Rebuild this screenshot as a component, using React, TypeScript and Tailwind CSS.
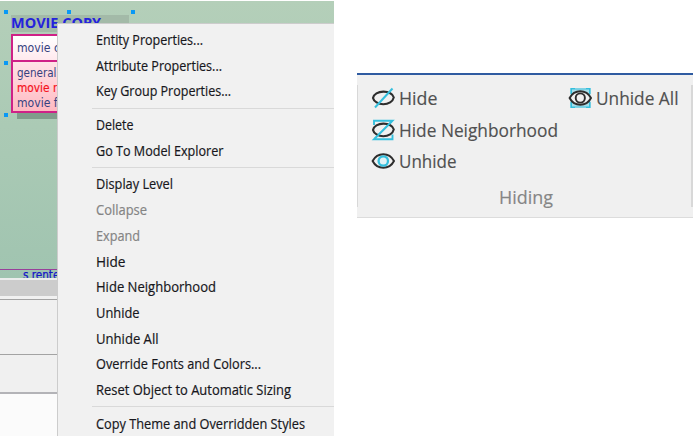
import { useLayoutEffect, useRef } from "react";

// Single-line label squeezed horizontally so that it spans `width` pixels.
function Label({ text, width, className = "" }: { text: string; width: number; className?: string }) {
  const ref = useRef<HTMLSpanElement>(null);
  useLayoutEffect(() => {
    const el = ref.current;
    if (el) el.style.transform = `scaleX(${width / el.getBoundingClientRect().width})`;
    return () => {
      if (el) el.style.transform = "";
    };
  }, [text, width]);
  return (
    <span className={`block shrink-0 ${className}`} style={{ width }}>
      <span ref={ref} className="inline-block origin-left whitespace-nowrap">
        {text}
      </span>
    </span>
  );
}

type Item = { text: string; width: number; disabled?: boolean };

const groups: Item[][] = [
  [
    { text: "Entity Properties...", width: 107 },
    { text: "Attribute Properties...", width: 126 },
    { text: "Key Group Properties...", width: 135 },
  ],
  [
    { text: "Delete", width: 37.5 },
    { text: "Go To Model Explorer", width: 127.5 },
  ],
  [
    { text: "Display Level", width: 77 },
    { text: "Collapse", width: 51, disabled: true },
    { text: "Expand", width: 44, disabled: true },
    { text: "Hide", width: 29.5 },
    { text: "Hide Neighborhood", width: 120 },
    { text: "Unhide", width: 43.5 },
    { text: "Unhide All", width: 62.5 },
    { text: "Override Fonts and Colors...", width: 165 },
    { text: "Reset Object to Automatic Sizing", width: 195 },
  ],
  [{ text: "Copy Theme and Overridden Styles", width: 209 }],
];

function ContextMenu() {
  return (
    <div className="absolute left-[57px] top-[23px] h-[413px] w-[277px] overflow-hidden border-l border-t border-[#cccccc] bg-[#f1f1f1] pt-[3.2px] font-['Open_Sans',sans-serif] text-[14px] [-webkit-text-stroke:0.2px_currentColor]">
      {groups.map((group, g) => (
        <div key={g}>
          {g > 0 && (
            <div className="flex h-[8px] items-center pl-[34px]">
              <div className="h-px w-full bg-[#d9d9d9]" />
            </div>
          )}
          {group.map((item) => (
            <div
              key={item.text}
              className={`flex h-[25.7px] items-center pl-[38px] leading-[20px] ${item.disabled ? "text-[#848484]" : "text-[#17171c]"}`}
            >
              <Label text={item.text} width={item.width} />
            </div>
          ))}
        </div>
      ))}
    </div>
  );
}

function Handle({ className }: { className: string }) {
  return <div className={`absolute h-[4px] w-[4px] bg-[#0a99f5] ${className}`} />;
}

function Diagram() {
  return (
    <div className="relative mt-px h-[277px] overflow-hidden bg-gradient-to-b from-[#b4cfb9] to-[#a0c4b0] font-['DejaVu_Sans',sans-serif]">
      <div className="absolute left-[11px] top-[14px] h-[17px] w-[118px] bg-[#a3baa8]" />
      <div className="absolute left-[11px] top-[12px] font-['Open_Sans',sans-serif] text-[15px] font-bold leading-[18px] text-[#2423dc]">
        <Label text="MOVIE COPY" width={90} />
      </div>
      <div className="absolute left-[17px] top-[111px] h-[7px] w-[80px] bg-[#809c8b]" />
      <div className="absolute left-[11px] top-[33px] h-[79px] w-[100px] border-2 border-[#cf2187] text-[12px] text-[#36417f]">
        <div className="h-[26px] border-b-2 border-[#cf2187] bg-gradient-to-b from-white to-[#ffe9ee] pl-[4px] pt-[5px] leading-[15px]">
          <Label text="movie copy" width={63} />
        </div>
        <div className="h-[49px] bg-gradient-to-b from-[#ffe3e7] to-[#ffb9c2] pl-[4px] pt-[4px] leading-[15px]">
          <Label text="general" width={39.5} />
          <Label text="movie rental" width={67} className="text-[#f5131d] [-webkit-text-stroke:0.2px_currentColor]" />
          <Label text="movie format" width={73} />
        </div>
      </div>
      <Handle className="left-[4px] top-[9px]" />
      <Handle className="left-[67px] top-[9px]" />
      <Handle className="left-[131px] top-[9px]" />
      <Handle className="left-[4px] top-[60px]" />
      <Handle className="left-[4px] top-[112px]" />
      <div className="absolute left-[23px] top-[266px] text-[12px] leading-[16px] text-[#1615c7] [-webkit-text-stroke:0.25px_currentColor]">
        <Label text="s rented" width={43} />
      </div>
      <div className="absolute left-0 top-[268px] h-[1.4px] w-full bg-[#98409a]" />
    </div>
  );
}

const dark = "#2d2d2d";
const cyan = "#35bfdd";

type EyeKind = "hide" | "neighborhood" | "unhide" | "all";

function EyeIcon({ kind }: { kind: EyeKind }) {
  const open = kind === "unhide" || kind === "all";
  return (
    <svg width="24" height="22" viewBox="0 0 24 22" fill="none" className="shrink-0">
      {kind === "neighborhood" && (
        <path d="M3 6V1.8H21.5L3 20.2H21.5V15.5" stroke={cyan} strokeWidth="1.9" />
      )}
      {kind === "all" && (
        <>
          <path d="M2.5 1H22.5V21H2.5Z" fill="#a7dfeb" />
          <path d="M3.2 7V1.8H21.8V7M3.2 15V20.2H21.8V15" stroke={cyan} strokeWidth="1.6" />
          <path d="M7 1.8H18M7 20.2H18" stroke="#7fd2e4" strokeWidth="1.6" />
        </>
      )}
      {open ? (
        <path
          d="M1.6 11C3.6 7.2 7.6 4.2 12.3 4.2C17 4.2 21 7.2 23 11C21 14.8 17 17.8 12.3 17.8C7.6 17.8 3.6 14.8 1.6 11Z"
          fill="#f1f1f1"
          stroke={dark}
          strokeWidth="2"
          strokeLinejoin="round"
        />
      ) : (
        <path
          d="M2 11C2.6 7.2 7.2 4.6 12.4 4.6C17.6 4.6 22 7 22.8 10.4C22 14.4 17.4 17.2 12.3 17.2C7.2 17.2 2.8 14.6 2 11Z"
          stroke={dark}
          strokeWidth="2.1"
          strokeLinejoin="round"
        />
      )}
      {kind === "hide" && <path d="M4 20.5L21.5 1.5" stroke={cyan} strokeWidth="2" />}
      {kind === "neighborhood" && <path d="M3.5 19.8L21 2.2" stroke={cyan} strokeWidth="1.9" />}
      {kind === "unhide" && <circle cx="12.3" cy="11" r="4.7" fill="#e2f2f5" stroke={cyan} strokeWidth="2.3" />}
      {kind === "all" && <circle cx="12.3" cy="11" r="4.6" stroke={dark} strokeWidth="1.9" />}
    </svg>
  );
}

function Command({ kind, text, width }: { kind: EyeKind; text: string; width: number }) {
  return (
    <div className="flex h-[31.3px] items-center gap-[4px]">
      <EyeIcon kind={kind} />
      <Label text={text} width={width} />
    </div>
  );
}

function Ribbon() {
  return (
    <div className="mt-[73px] h-[145px] w-[336px] border-b border-t-2 border-b-[#dcdcdc] border-t-[#2f5ba1] bg-[#f0f0f0] pt-[10px] font-['Open_Sans',sans-serif] text-[17.5px] leading-[24px] text-[#505050] [-webkit-text-stroke:0.15px_currentColor]">
      <div className="flex h-[122px] flex-col border-l border-r-2 border-[#d8d8d8]">
        <div className="-mt-[2.4px] flex justify-between pl-[13px] pr-[13px]">
          <div>
            <Command kind="hide" text="Hide" width={38.5} />
            <Command kind="neighborhood" text="Hide Neighborhood" width={159} />
            <Command kind="unhide" text="Unhide" width={57.5} />
          </div>
          <Command kind="all" text="Unhide All" width={82.5} />
        </div>
        <div className="mt-[8.4px] flex justify-center pl-[3px] text-[#858585]">
          <Label text="Hiding" width={54} />
        </div>
      </div>
    </div>
  );
}

export default function App() {
  return (
    <div className="relative flex h-[436px] w-[693px] justify-between overflow-hidden bg-white">
      <div className="flex w-[334px] flex-col">
        <Diagram />
        <div className="h-[2px] bg-[#ececec]" />
        <div className="h-[16px] bg-[#cccccc]" />
        <div className="h-[3px] bg-[#f1f1f1]" />
        <div className="h-[55px] border-t border-[#a3a3a3] bg-[#f0f0f0]" />
        <div className="h-[38px] border-t border-[#a3a3a3] bg-[#f0f0f0]" />
        <div className="flex-1 border-t-2 border-[#b3b3b7] bg-[#fbfbfb]" />
      </div>
      <Ribbon />
      <ContextMenu />
    </div>
  );
}
